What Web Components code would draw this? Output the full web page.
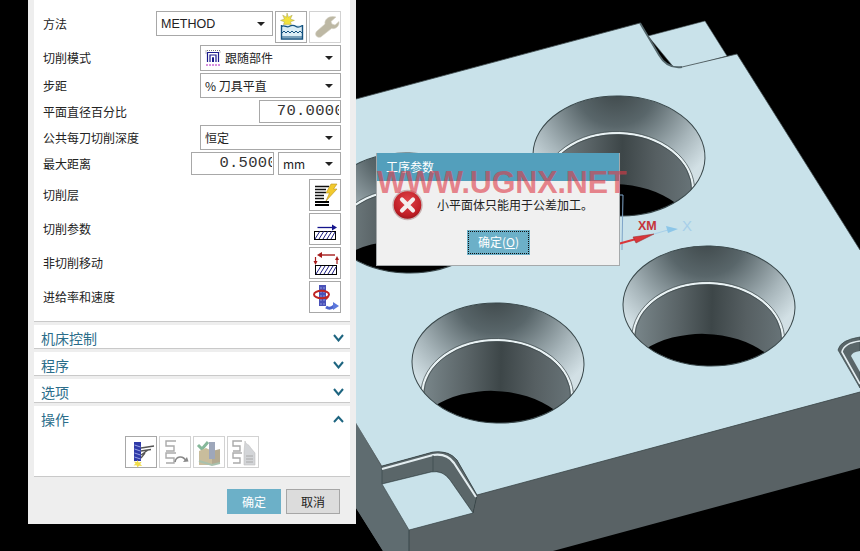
<!DOCTYPE html>
<html>
<head>
<meta charset="utf-8">
<title>工序参数</title>
<style>
  html, body { margin: 0; padding: 0; background: #000; }
  body { width: 860px; height: 551px; overflow: hidden; font-family: "Noto Sans CJK SC", "Liberation Sans", sans-serif; }
</style>
</head>
<body>
<cam-workspace>
  <cam-scene slot="scene"></cam-scene>
  <op-panel>
    <op-card>
      <op-row label="方法" tall>
        <op-select width="117" height="25" mono>METHOD</op-select>
        <op-icon name="method"></op-icon>
        <op-icon name="wrench" off></op-icon>
      </op-row>
      <op-row label="切削模式">
        <op-select width="141" height="26" glyph="follow">跟随部件</op-select>
      </op-row>
      <op-row label="步距">
        <op-select width="141" height="25">% 刀具平直</op-select>
      </op-row>
      <op-row label="平面直径百分比">
        <op-input width="82">70.0000</op-input>
      </op-row>
      <op-row label="公共每刀切削深度">
        <op-select width="141" height="25">恒定</op-select>
      </op-row>
      <op-row label="最大距离">
        <op-input width="83" style="margin-right:2px">0.5000</op-input>
        <op-select width="63" height="23">mm</op-select>
      </op-row>
      <op-row label="切削层" style="margin-top:2px"><op-icon name="levels"></op-icon></op-row>
      <op-row label="切削参数"><op-icon name="params"></op-icon></op-row>
      <op-row label="非切削移动"><op-icon name="moves"></op-icon></op-row>
      <op-row label="进给率和速度"><op-icon name="feeds"></op-icon></op-row>
    </op-card>
    <op-section title="机床控制"></op-section>
    <op-section title="程序"></op-section>
    <op-section title="选项"></op-section>
    <op-section title="操作" open>
      <op-icon name="generate"></op-icon>
      <op-icon name="replay" off></op-icon>
      <op-icon name="verify" off></op-icon>
      <op-icon name="list" off></op-icon>
    </op-section>
    <op-footer></op-footer>
  </op-panel>
  <op-dialog slot="overlay" title="工序参数">小平面体只能用于公差加工。</op-dialog>
  <span slot="overlay" style="position:absolute;left:377px;top:164px;font:bold 30.5px/36px 'Liberation Sans',sans-serif;letter-spacing:-.1px;color:rgba(222,58,70,.6);white-space:nowrap">WWW.UGNX.NET</span>
</cam-workspace>

<script>
const HATCH = `
  <rect x="4.5" y="17.5" width="21" height="8" fill="#fff" stroke="#000"/>
  <path d="M5 25l5-8M9 25l5-8M13 25l5-8M17 25l5-8M21 25l4-7" stroke="#1b1b80" fill="none"/>`;

const ICONS = {
  method: `
    <path d="M11 1l1.4 4.2 3.8-2-1.8 3.8 4 1.4-4 1.4 1 2.6H7.5l1-2.6-4-1.4 4-1.4-1.8-3.8 3.8 2z" fill="#f2e23a" stroke="#a9a24a" stroke-width=".5"/>
    <path d="M5.5 13v14h21V13" fill="#dbeef6" stroke="#14527f" stroke-width="1.4"/>
    <path d="M5.5 14.5c3-2 5 1.500 7.500 0s5-1.500 7 0 4 .5 6.500-1" fill="none" stroke="#14527f" stroke-width="1.300"/>
    <path d="M6 21l2-2 2 2 2-2 2 2 2-2 2 2 2-2 2 2 2-2 2 2M6 25h20" fill="none" stroke="#14527f"/>`,
  wrench: `
    <path d="M26 5l-5 4.500 1 2.500 3 1 4-3.500c.5 4-2.500 8-7.500 7L12 24c-1.500 2-5 1.500-6-.5-1-2 0-3.500 1-4.500l8-7c-1-5 5-9 11-7z" fill="#bdb8a4" stroke="#d4d0c2" stroke-width=".6"/>`,
  levels: `
    <path d="M5 6.500h14M5 9.500h11M5 12.500h11M5 15.500h9M5 18.500h9" stroke="#111" stroke-width="1.500"/>
    <path d="M5 22h14M5 25h14" stroke="#000" stroke-width="2"/>
    <path d="M21 4h6l-3.500 5H27L16 21l3.500-8H16z" fill="#f2c92d" stroke="#b99422" stroke-width=".6"/>`,
  params: `
    <path d="M7.500 13.500H23" stroke="#14148c" stroke-width="1.300"/>
    <path d="M22 10.500l5 3-5 3z" fill="#14148c"/>${HATCH}`,
  moves: `
    <path d="M10 7H25" stroke="#a51a1a" stroke-width="1.400"/>
    <path d="M12 4v6l-5-3z" fill="#a51a1a"/>
    <path d="M5.500 9v5M27 10v6" stroke="#a51a1a" stroke-width="1.200"/>
    <path d="M3.500 13h4l-2 4zM25 12h4l-2-4z" fill="#a51a1a"/>
    <rect x="5.500" y="17.500" width="21" height="9" fill="#fff" stroke="#000"/>
    <path d="M6 26l5-8M10 26l5-8M14 26l5-8M18 26l5-8M22 26l4-7" stroke="#1b1b80" fill="none"/>`,
  feeds: `
    <rect x="9" y="3" width="7" height="21" fill="#4a52b8"/>
    <path d="M10 6h5M10 10h5M10 14h5M10 18h5M10 22h5" stroke="#8f98dd" stroke-dasharray="2 1"/>
    <ellipse cx="11.500" cy="12.500" rx="7.500" ry="3.800" fill="none" stroke="#bf2323" stroke-width="2"/>
    <path d="M15 15h4l-2.500 3z" fill="#bf2323"/>
    <path d="M16 25c3 2 6 1 8-1" fill="none" stroke="#4a62cc" stroke-width="3"/>
    <path d="M23 20l6 4-6 4z" fill="#5c78dc"/>`,
  generate: `
    <rect x="8" y="5" width="7" height="19" fill="#2f3aa8"/>
    <path d="M8.500 8l6 2M8.500 12l6 2M8.500 16l6 2M8.500 20l6 2" stroke="#9aa4e4"/>
    <path d="M15 11l13-2M15 14l10-1.500M15 18l7-5M15 21l4-5" stroke="#555" stroke-width="1.300" fill="none"/>
    <path d="M11.500 23l1.200 2.500 3-.8-1.500 2.300 2 2-3-.2-1.700 1.500-1-2-3 .2 2-2-1.700-2 3 .5z" fill="#f0dc4a"/>`,
  replay: `
    <path d="M16 4H6v5h8v5H6M16 16H6v5h8v5H6" fill="none" stroke="#aaa" stroke-width="1.400"/>
    <path d="M15 25c1-6 8-7 11-1" fill="none" stroke="#888" stroke-width="1.600"/>
    <path d="M23 25l5.500-.5-1.500-4.500z" fill="#888"/>`,
  verify: `
    <path d="M4 8l4 4 6-7" fill="none" stroke="#86b89a" stroke-width="3"/>
    <path d="M5 14l7-3 6 3v14H5z" fill="#c9bd9c"/>
    <path d="M18 14l8-2v14l-8 2z" fill="#b4aa90"/>
    <rect x="15" y="5" width="6" height="17" fill="#9ea7ba"/>
    <path d="M5 24l13 4 8-2" stroke="#a9c1ad" stroke-width="2" fill="none"/>`,
  list: `
    <path d="M14 4H5v5h7v5H5M14 16H5v5h7v5H5" fill="none" stroke="#aaa" stroke-width="1.400"/>
    <path d="M17 4c1 4 4 3 5 6l5 6v12H16V15z" fill="#d3d5d8" stroke="#c0c0c0" stroke-width=".6"/>
    <path d="M18 19h7M18 22h7M18 25h7" stroke="#aaa"/>`,
};

class CamWorkspace extends HTMLElement {
  constructor() {
    super();
    this.attachShadow({mode: 'open'}).innerHTML = `
      <style>
        :host { display: block; position: relative; width: 860px; height: 551px; overflow: hidden; background: #000; }
        .panel { position: relative; padding-left: 28px; }
      </style>
      <slot name="scene"></slot>
      <div class="panel"><slot></slot></div>
      <slot name="overlay"></slot>`;
  }
}

class CamScene extends HTMLElement {
  constructor() {
    super();
    this.attachShadow({mode: 'open'}).innerHTML = `
      <style>
        :host { display: block; position: absolute; left: 0; top: 0; width: 860px; height: 551px; }
        svg { display: block; }
        text { font-family: "Liberation Sans", sans-serif; }
      </style>
      <svg width="860" height="551" viewBox="0 0 860 551">
        <defs>
          <clipPath id="holeClip"><ellipse cx="0" cy="0" rx="86" ry="60"/></clipPath>
          <radialGradient id="fillet" gradientUnits="userSpaceOnUse" cx="-5" cy="-70" r="115">
            <stop offset="0" stop-color="#3c4547"/>
            <stop offset=".35" stop-color="#59666a"/>
            <stop offset=".75" stop-color="#a7b5ba"/>
            <stop offset="1" stop-color="#d2e0e5"/>
          </radialGradient>
          <linearGradient id="bore" gradientUnits="userSpaceOnUse" x1="-75" y1="0" x2="75" y2="0">
            <stop offset="0" stop-color="#7a878b"/>
            <stop offset=".3" stop-color="#596366"/>
            <stop offset=".52" stop-color="#3d4648"/>
            <stop offset=".75" stop-color="#565f62"/>
            <stop offset="1" stop-color="#687478"/>
          </linearGradient>
          <g id="hole" transform="rotate(1.500)">
            <g clip-path="url(#holeClip)">
              <rect x="-90" y="-64" width="180" height="128" fill="url(#fillet)"/>
              <ellipse cx="0" cy="33" rx="75" ry="56" fill="url(#bore)" stroke="#e9f2f4" stroke-width="2.400"/>
              <ellipse cx="0" cy="33" rx="76.500" ry="57.500" fill="none" stroke="#3f4a4c" stroke-width=".7"/>
              <ellipse cx="0" cy="33" rx="73.500" ry="54.500" fill="none" stroke="#3f4a4c" stroke-width=".7"/>
              <ellipse cx="-3" cy="88" rx="86" ry="60" fill="#000"/>
            </g>
            <ellipse cx="0" cy="0" rx="86" ry="60" fill="none" stroke="#39474a" stroke-width="1"/>
          </g>
        </defs>

        <path d="M356 423L382 466V484L409 530 473 513 477 495 860 392V468L553 551H383L356 508Z" fill="#596265"/>
        <path d="M356 423L383 470V484L409 530V551H383L356 508Z" fill="#5f6c70"/>
        <path d="M409 530V551" stroke="#39474a"/>

        <path d="M648 36L705 21 727 56 676 70Z" fill="#c9e2ea" stroke="#4e5b5e" stroke-width=".6"/>
        <path d="M356 99L640 23 659 55Q667 69 682 67L737 54 860 250V392L477 495 457 460Q449 450 433 452L382 466 356 423Z" fill="#c9e2ea"/>
        <path d="M356 99L640 23M682 67L737 54 860 250M477 495L860 392" fill="none" stroke="#3f4a4c" stroke-width=".8"/>
        <path d="M640 23L659 55Q667 69 682 67" fill="none" stroke="#55676c" stroke-width="1.800"/>

        <path d="M382 466L433 452Q449 450 457 460L477 495 473 513 450 480Q443 470 431 472L382 484Z" fill="#5a6669" stroke="#39474a" stroke-width=".7"/>
        <path d="M382 469L433 455Q447 453 454 463L476 497" fill="none" stroke="#e4eef1" stroke-width="2.200"/>
        <path d="M433 455V472" stroke="#39474a" stroke-width=".7"/>
        <path d="M382 484L431 472Q443 470 450 480L473 513 409 530Z" fill="#c9e2ea" stroke="#39474a" stroke-width=".6"/>

        <path d="M860 337Q840 340 838 350L860 388Z" fill="#5a6669" stroke="#39474a" stroke-width=".7"/>
        <path d="M860 341Q844 343 842 352L860 384" fill="none" stroke="#e4eef1" stroke-width="1.600"/>
        <path d="M860 351Q852 352 851 356L860 372Z" fill="#c9e2ea"/>

        <use href="#hole" x="408" y="213"/>
        <use href="#hole" x="619" y="156"/>
        <use href="#hole" x="709" y="306"/>
        <use href="#hole" x="498" y="363"/>

        <path d="M618 195H623L622 250" fill="none" stroke="#7fa5c9"/>
        <path d="M618 244L636 239" stroke="#d9363a" stroke-width="2"/>
        <path d="M633 237L654 234 636 243Z" fill="#d9363a" stroke="#8e2b2e" stroke-width=".5"/>
        <path d="M654 234L668 230" stroke="#a7cfe9"/>
        <path d="M666 226L678 229 668 233Z" fill="#8cc6e8"/>
        <text x="638" y="230" font-size="12.500" font-weight="bold" fill="#c5343a">XM</text>
        <text x="682" y="231" font-size="15" fill="#a7cfe9">X</text>
      </svg>`;
  }
}

class OpPanel extends HTMLElement {
  constructor() {
    super();
    this.attachShadow({mode: 'open'}).innerHTML = `
      <style>
        :host {
          display: flex; flex-direction: column; gap: 3px;
          box-sizing: border-box; width: 328px; height: 524px;
          padding: 0 6px; background: #eeeeee;
          font: 12px/16px "Noto Sans CJK SC", "Liberation Sans", sans-serif; color: #222;
        }
      </style>
      <slot></slot>`;
  }
}

class OpCard extends HTMLElement {
  constructor() {
    super();
    this.attachShadow({mode: 'open'}).innerHTML = `
      <style>
        :host {
          display: flex; flex-direction: column; gap: 2px;
          height: 322px; box-sizing: border-box;
          padding: 11px 9px 0; background: #fff;
          border-bottom: 1px solid #c9c9c9;
        }
      </style>
      <slot></slot>`;
  }
}

class OpRow extends HTMLElement {
  constructor() {
    super();
    const tall = this.hasAttribute('tall');
    this.attachShadow({mode: 'open'}).innerHTML = `
      <style>
        :host { display: flex; align-items: ${tall ? 'flex-start' : 'center'}; }
        .label { flex: 1; white-space: nowrap; ${tall ? 'line-height: 25px;' : ''} }
        .controls { display: flex; gap: 2px; align-items: flex-start; }
      </style>
      <span class="label">${this.getAttribute('label')}</span>
      <span class="controls"><slot></slot></span>`;
  }
}

class OpSelect extends HTMLElement {
  constructor() {
    super();
    const w = this.getAttribute('width');
    const h = this.getAttribute('height');
    const glyph = this.getAttribute('glyph') === 'follow' ? `
      <svg width="16" height="18" viewBox="0 0 16 18">
        <path d="M1 4.500V1.500H15V4.500" fill="none" stroke="#777" stroke-dasharray="1 1"/>
        <path d="M2.500 13V3.500H13.500V13M5 13V6H11V13" fill="none" stroke="#1a1a8c" stroke-width="1.200"/>
        <path d="M7.500 13V8.500H8.500V13" stroke="#1a1a8c" fill="none"/>
        <path d="M1 16H15" stroke="#b020c0" stroke-dasharray="2 1"/>
      </svg>` : '';
    this.attachShadow({mode: 'open'}).innerHTML = `
      <style>
        :host {
          display: flex; align-items: center; gap: 4px; box-sizing: border-box;
          width: ${w}px; height: ${h}px; padding: 0 5px 0 4px;
          border: 1px solid #a8a8a8; background: #fff; white-space: nowrap;
          ${this.hasAttribute('mono') ? 'font-family: "Liberation Sans", sans-serif; font-size: 12.500px;' : ''}
        }
        .text { flex: 1; }
        .arrow { width: 0; height: 0; border: 4px solid transparent; border-top: 4.500px solid #222; border-bottom: 0; margin-right: 2px; }
        svg { flex: none; }
      </style>
      ${glyph}<span class="text"><slot></slot></span><span class="arrow"></span>`;
  }
}

class OpInput extends HTMLElement {
  constructor() {
    super();
    this.attachShadow({mode: 'open'}).innerHTML = `
      <style>
        :host {
          display: block; box-sizing: border-box;
          width: ${this.getAttribute('width')}px; height: 23px; overflow: hidden;
          border: 1px solid #a8a8a8; background: #fff;
        }
        div {
          display: flex; justify-content: flex-end; width: calc(100% - 1px); overflow: hidden;
          font: 15.500px/21px "Liberation Mono", monospace; letter-spacing: .3px; color: #333;
          margin-right: 1px; white-space: nowrap;
        }
        span { flex: none; margin-right: -5px; }
      </style>
      <div><span><slot></slot></span></div>`;
  }
}

class OpIcon extends HTMLElement {
  constructor() {
    super();
    const off = this.hasAttribute('off');
    this.attachShadow({mode: 'open'}).innerHTML = `
      <style>
        :host {
          display: block; flex: none; box-sizing: border-box; width: 32px; height: 32px;
          border: 1px solid ${off ? '#d2d2d2' : '#a8a8a8'}; background: #fff;
        }
        svg { display: block; }
      </style>
      <svg width="30" height="30" viewBox="0 0 30 30">${ICONS[this.getAttribute('name')]}</svg>`;
  }
}

class OpSection extends HTMLElement {
  constructor() {
    super();
    const open = this.hasAttribute('open');
    this.attachShadow({mode: 'open'}).innerHTML = `
      <style>
        :host { display: block; background: #fff; border-bottom: 1px solid #c9c9c9; box-sizing: border-box; height: ${open ? 71 : 24}px; }
        .head {
          display: flex; align-items: center; justify-content: space-between;
          height: 24px; padding: 1px 6px 0 7px; box-sizing: border-box;
          font-size: 14px; color: #2b6d8a;
        }
        .body { display: flex; justify-content: center; gap: 2px; margin-top: 6px; padding-right: 1px; }
        svg { display: block; }
      </style>
      <div class="head">
        <span>${this.getAttribute('title')}</span>
        <svg width="11" height="8" viewBox="0 0 11 8"><path d="${open ? 'M1 7L5.500 2 10 7' : 'M1 1L5.500 6.500 10 1'}" fill="none" stroke="#1e6580" stroke-width="2"/></svg>
      </div>
      ${open ? '<div class="body"><slot></slot></div>' : ''}`;
    this.removeAttribute('title');
  }
}

class OpFooter extends HTMLElement {
  constructor() {
    super();
    this.attachShadow({mode: 'open'}).innerHTML = `
      <style>
        :host { display: flex; justify-content: flex-end; gap: 5px; padding: 9px 10px 0 0; }
        span {
          display: block; box-sizing: border-box; width: 54px; height: 25px;
          text-align: center; line-height: 23px;
        }
        .ok { background: #6cb0c8; color: #fff; line-height: 25px; }
        .no { background: #dcdcdc; border: 1px solid #a6a6a6; color: #222; }
      </style>
      <span class="ok">确定</span><span class="no">取消</span>`;
  }
}

class OpDialog extends HTMLElement {
  constructor() {
    super();
    this.attachShadow({mode: 'open'}).innerHTML = `
      <style>
        :host {
          display: flex; flex-direction: column; position: absolute; left: 376px; top: 153px;
          box-sizing: border-box; width: 244px; height: 113px;
          background: #f0f0f0; border: 1px solid #a5a9ab; border-top: 0;
          font: 12px/16px "Noto Sans CJK SC", "Liberation Sans", sans-serif; color: #222;
        }
        .title { height: 28px; padding: 6px 0 0 9px; box-sizing: border-box; background: #539fbc; color: #fff; }
        .msg { display: flex; align-items: center; gap: 14px; padding: 8px 0 0 15px; }
        .msg svg { display: block; flex: none; }
        .btn {
          align-self: center; box-sizing: border-box; width: 63px; height: 25px; margin: 9px 0 0 1px;
          background: #6cb0c8; color: #fff; padding: 1px; text-align: center;
        }
        .btn div { border: 1px dotted #111; height: 23px; box-sizing: border-box; line-height: 20px; }
        u { text-underline-offset: 1px; }
      </style>
      <div class="title">${this.getAttribute('title')}</div>
      <div class="msg">
        <svg width="31" height="32" viewBox="0 0 31 32">
          <defs><radialGradient id="err" cx=".5" cy=".35" r=".7"><stop offset="0" stop-color="#e0444a"/><stop offset=".7" stop-color="#c01e26"/><stop offset="1" stop-color="#8e1218"/></radialGradient></defs>
          <circle cx="15.500" cy="16" r="14.500" fill="url(#err)" stroke="#c9b3b3" stroke-width="1.400"/>
          <path d="M10 10.500L21 21.500M21 10.500L10 21.500" stroke="#f4eeee" stroke-width="4.200" stroke-linecap="round"/>
        </svg>
        <span><slot></slot></span>
      </div>
      <div class="btn"><div>确定(<u>O</u>)</div></div>`;
    this.removeAttribute('title');
  }
}

customElements.define('cam-workspace', CamWorkspace);
customElements.define('cam-scene', CamScene);
customElements.define('op-panel', OpPanel);
customElements.define('op-card', OpCard);
customElements.define('op-row', OpRow);
customElements.define('op-select', OpSelect);
customElements.define('op-input', OpInput);
customElements.define('op-icon', OpIcon);
customElements.define('op-section', OpSection);
customElements.define('op-footer', OpFooter);
customElements.define('op-dialog', OpDialog);
</script>
</body>
</html>
